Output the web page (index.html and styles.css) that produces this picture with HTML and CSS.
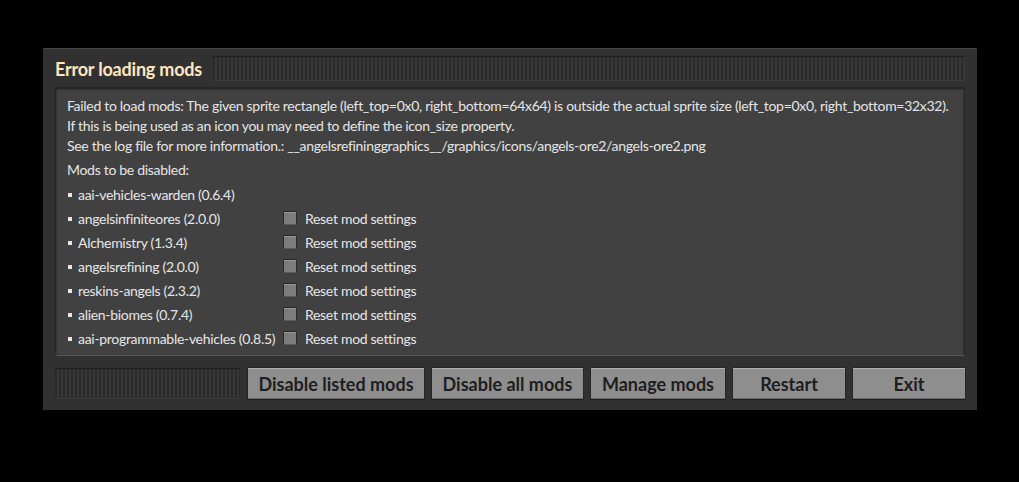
FILE: index.html
```html
<!DOCTYPE html>
<html lang="en">
<head>
    <meta charset="UTF-8">
    <title>Error loading mods</title>
    <link rel="stylesheet" href="styles.css">
</head>
<body>
    <div class="frame">
        <div class="titlebar">
            <h1 class="title">Error loading mods</h1>
            <div class="drag"></div>
        </div>
        <div class="panel">
            <p class="message">Failed to load mods: The given sprite rectangle (left_top=0x0, right_bottom=64x64) is outside the actual sprite size (left_top=0x0, right_bottom=32x32).<br>
            If this is being used as an icon you may need to define the icon_size property.<br>
            See the log file for more information.: __angelsrefininggraphics__/graphics/icons/angels-ore2/angels-ore2.png</p>
            <p class="heading">Mods to be disabled:</p>
            <div class="mods">
                <span class="mod">aai-vehicles-warden (0.6.4)</span><span></span><span></span>
                <span class="mod">angelsinfiniteores (2.0.0)</span><span class="check"></span><span>Reset mod settings</span>
                <span class="mod">Alchemistry (1.3.4)</span><span class="check"></span><span>Reset mod settings</span>
                <span class="mod">angelsrefining (2.0.0)</span><span class="check"></span><span>Reset mod settings</span>
                <span class="mod">reskins-angels (2.3.2)</span><span class="check"></span><span>Reset mod settings</span>
                <span class="mod">alien-biomes (0.7.4)</span><span class="check"></span><span>Reset mod settings</span>
                <span class="mod">aai-programmable-vehicles (0.8.5)</span><span class="check"></span><span>Reset mod settings</span>
            </div>
        </div>
        <div class="actions">
            <div class="drag"></div>
            <button class="button b1">Disable listed mods</button>
            <button class="button b2">Disable all mods</button>
            <button class="button b3">Manage mods</button>
            <button class="button b4">Restart</button>
            <button class="button b5">Exit</button>
        </div>
    </div>
</body>
</html>
```

FILE: styles.css
```css
/* factorio style error dialog */
body {
    margin: 0;
    background-color: #000;
    font-family: 'Lato', sans-serif;
}
.frame {
    box-sizing: border-box;
    margin: 48px 0 0 43px;
    width: 934px;
    height: 362px;
    padding: 7px 12px 11px 12px;
    background-color: #313131;
    border-top: 1px solid #454545;
    box-shadow: 0 0 3px #000;
}
.titlebar {
    display: flex;
    align-items: center;
    height: 25px;
    gap: 11px;
}
.title {
    margin: 0;
    font-size: 18px;
    font-weight: bold;
    letter-spacing: -0.2px;
    color: #ffe6c0;
    white-space: nowrap;
}
.drag {
    flex: 1;
    align-self: stretch;
    background: repeating-linear-gradient(90deg, #2a2a2a 0 2px, #383838 2px 4px);
    box-shadow: inset 0 1px 1px #1e1e1e, inset 0 -1px 0 #3a3a3a;
}
.panel {
    box-sizing: border-box;
    margin-top: 6px;
    height: 269px;
    padding: 8px 11px 0 11px;
    background-color: #414141;
    border: 1px solid #262626;
    border-bottom-color: #565656;
    box-shadow: inset 0 1px 2px #1c1c1c;
    color: #e6e6e6;
    font-size: 14px;
    letter-spacing: -0.3px;
}
.message {
    margin: 0;
    line-height: 20px;
    white-space: nowrap;
}
.heading {
    margin: 2px 0 0 0;
    line-height: 24px;
}
.mods {
    display: grid;
    grid-template-columns: 214px auto 1fr;
    grid-auto-rows: 24px;
    align-items: center;
}
.mod {
    white-space: nowrap;
}
.mod::before {
    content: "";
    display: inline-block;
    width: 4px;
    height: 4px;
    margin: 0 6px 2px 1px;
    background-color: #e6e6e6;
    vertical-align: middle;
}
.check {
    box-sizing: border-box;
    width: 14px;
    height: 14px;
    margin: 0 8px 0 2px;
    background-color: #7c7c7c;
    border: 1px solid #2a2a2a;
    border-bottom-color: #5a5a5a;
    box-shadow: inset 0 1px 0 #969696;
}
.actions {
    display: flex;
    gap: 8px;
    margin-top: 12px;
    height: 31px;
}
.actions .drag {
    flex: none;
    width: 185px;
}
.button {
    box-sizing: border-box;
    height: 31px;
    padding: 0;
    background-color: #8e8e8e;
    border: none;
    border-top: 1px solid #b0b0b0;
    box-shadow: 0 1px 0 #1c1c1c, 0 0 0 1px #262626, inset 0 -1px 0 #6a6a6a;
    font-family: 'Lato', sans-serif;
    font-size: 18px;
    font-weight: bold;
    color: #1e1e1e;
}
.b1 { width: 176px; }
.b2 { width: 151px; }
.b3 { width: 134px; }
.b4 { width: 112px; }
.b5 { width: 112px; }
```
